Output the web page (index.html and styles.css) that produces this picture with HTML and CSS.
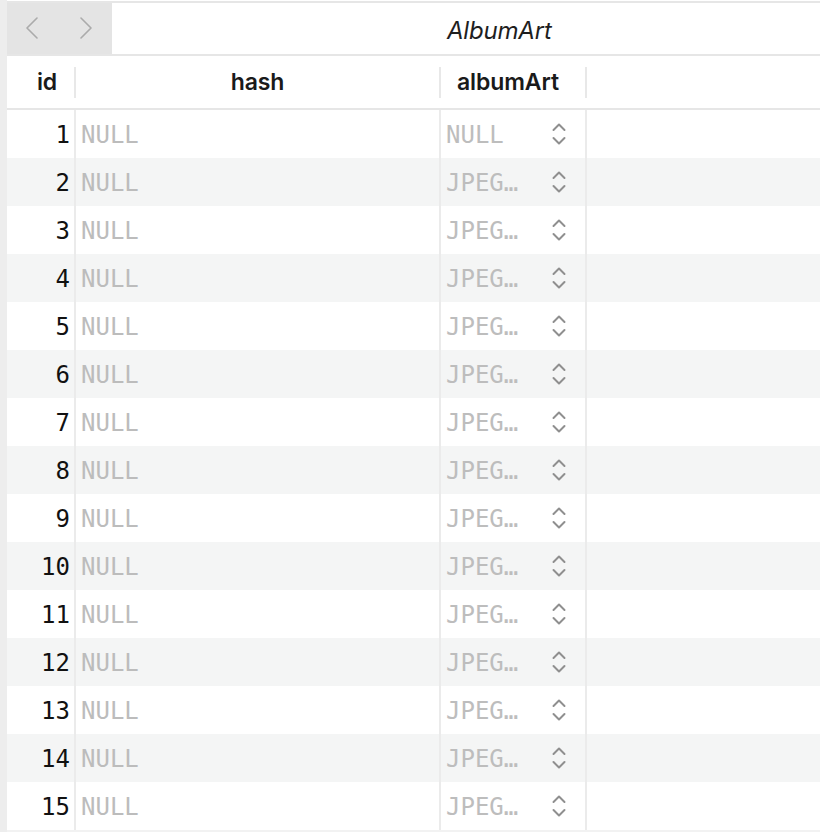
FILE: index.html
```html
<!DOCTYPE html>
<html>
<head>
<meta charset="utf-8">
<link rel="stylesheet" href="styles.css">
</head>
<body>
<div class="strip"></div>
<div class="main">
  <div class="topline"></div>
  <div class="toolbar">
    <div class="nav">
      <svg class="arrow" width="14" height="22" viewBox="0 0 14 22"><polyline points="12,1 2,11 12,21" /></svg>
      <svg class="arrow" width="14" height="22" viewBox="0 0 14 22"><polyline points="2,1 12,11 2,21" /></svg>
    </div>
    <div class="title">AlbumArt</div>
  </div>
  <div class="hrow">
    <div class="hcell h-id"><span>id</span></div>
    <div class="hcell h-hash sep"><span>hash</span></div>
    <div class="hcell h-art sep"><span>albumArt</span></div>
    <div class="hcell sep"></div>
  </div>
  <div class="rows" id="rows"></div>
  <div class="filler"></div>
</div>
<template id="rowtpl">
  <div class="row">
    <div class="c-id"></div>
    <div class="c-hash">NULL</div>
    <div class="c-art"><span class="val"></span>
      <svg class="updown" width="14" height="22" viewBox="0 0 14 22"><polyline points="1.5,7 7,1.5 12.5,7" /><polyline points="1.5,15 7,20.5 12.5,15" /></svg>
    </div>
    <div class="c-rest"></div>
  </div>
</template>
<script src="script.js"></script>
</body>
</html>
```

FILE: script.js
```js
const rows = document.getElementById('rows');
const tpl = document.getElementById('rowtpl');
for (let i = 1; i <= 15; i++) {
  const r = tpl.content.firstElementChild.cloneNode(true);
  if (i % 2 === 0) r.classList.add('alt');
  r.querySelector('.c-id').textContent = i;
  r.querySelector('.val').textContent = i === 1 ? 'NULL' : 'JPEG…';
  rows.appendChild(r);
}
```

FILE: styles.css
```css
html, body {
  margin: 0;
  padding: 0;
  height: 832px;
  overflow: hidden;
  background: #ffffff;
}
body {
  display: flex;
  font-family: "Inter", "Liberation Sans", sans-serif;
}
.strip {
  width: 7px;
  flex: none;
  background: #ededed;
}
.main {
  flex: 1;
  display: flex;
  flex-direction: column;
}
.main > * {
  flex: none;
}
.topline {
  height: 2px;
  margin-top: 1px;
  background: #e6e6e6;
}
.toolbar {
  height: 51px;
  display: flex;
  border-bottom: 2px solid #e6e6e6;
}
.nav {
  width: 105px;
  background: #e4e4e4;
  display: flex;
  align-items: flex-start;
  padding: 14px 0 0 18px;
  gap: 40px;
  box-sizing: border-box;
}
.arrow polyline {
  fill: none;
  stroke: #ababab;
  stroke-width: 1.6;
  stroke-linecap: round;
  stroke-linejoin: round;
}
.title {
  padding-left: 335px;
  padding-top: 2px;
  font-style: italic;
  font-size: 24px;
  color: #1e1e1e;
  line-height: 51px;
  letter-spacing: -0.2px;
}
.hrow {
  height: 52px;
  display: grid;
  grid-template-columns: 67px 365px 146px 1fr;
  align-items: center;
  border-bottom: 2px solid #e6e6e6;
}
.hcell {
  height: 31px;
  box-sizing: border-box;
  display: flex;
  align-items: center;
  justify-content: center;
  font-weight: 600;
  font-size: 23px;
  color: #1a1a1a;
  letter-spacing: -0.1px;
}
.hcell.sep {
  border-left: 2px solid #e8e8e8;
}
.h-id {
  padding-left: 13px;
}
.h-art {
  padding-right: 10px;
}
.row {
  height: 48px;
  display: grid;
  grid-template-columns: 67px 365px 146px 1fr;
  align-items: stretch;
  font-family: "DejaVu Sans Mono", "Liberation Mono", monospace;
  font-size: 24px;
}
.row.alt {
  background: #f4f5f5;
}
.row > div {
  box-sizing: border-box;
  display: flex;
  align-items: center;
  padding-top: 2px;
}
.c-id {
  justify-content: flex-end;
  padding-right: 4px;
  color: #111111;
}
.c-hash {
  border-left: 2px solid #ebebeb;
  padding-left: 5px;
  color: #bcbcbc;
}
.c-art {
  border-left: 2px solid #ebebeb;
  padding: 0 19px 0 5px;
  justify-content: space-between;
  color: #bdbdbd;
}
.c-art .updown {
  margin-top: -2px;
}
.c-rest {
  border-left: 2px solid #ebebeb;
}
.updown polyline {
  fill: none;
  stroke: #8f8f8f;
  stroke-width: 2;
  stroke-linecap: round;
  stroke-linejoin: round;
}
.filler {
  height: 10px;
  background: #f2f2f2;
}
```
